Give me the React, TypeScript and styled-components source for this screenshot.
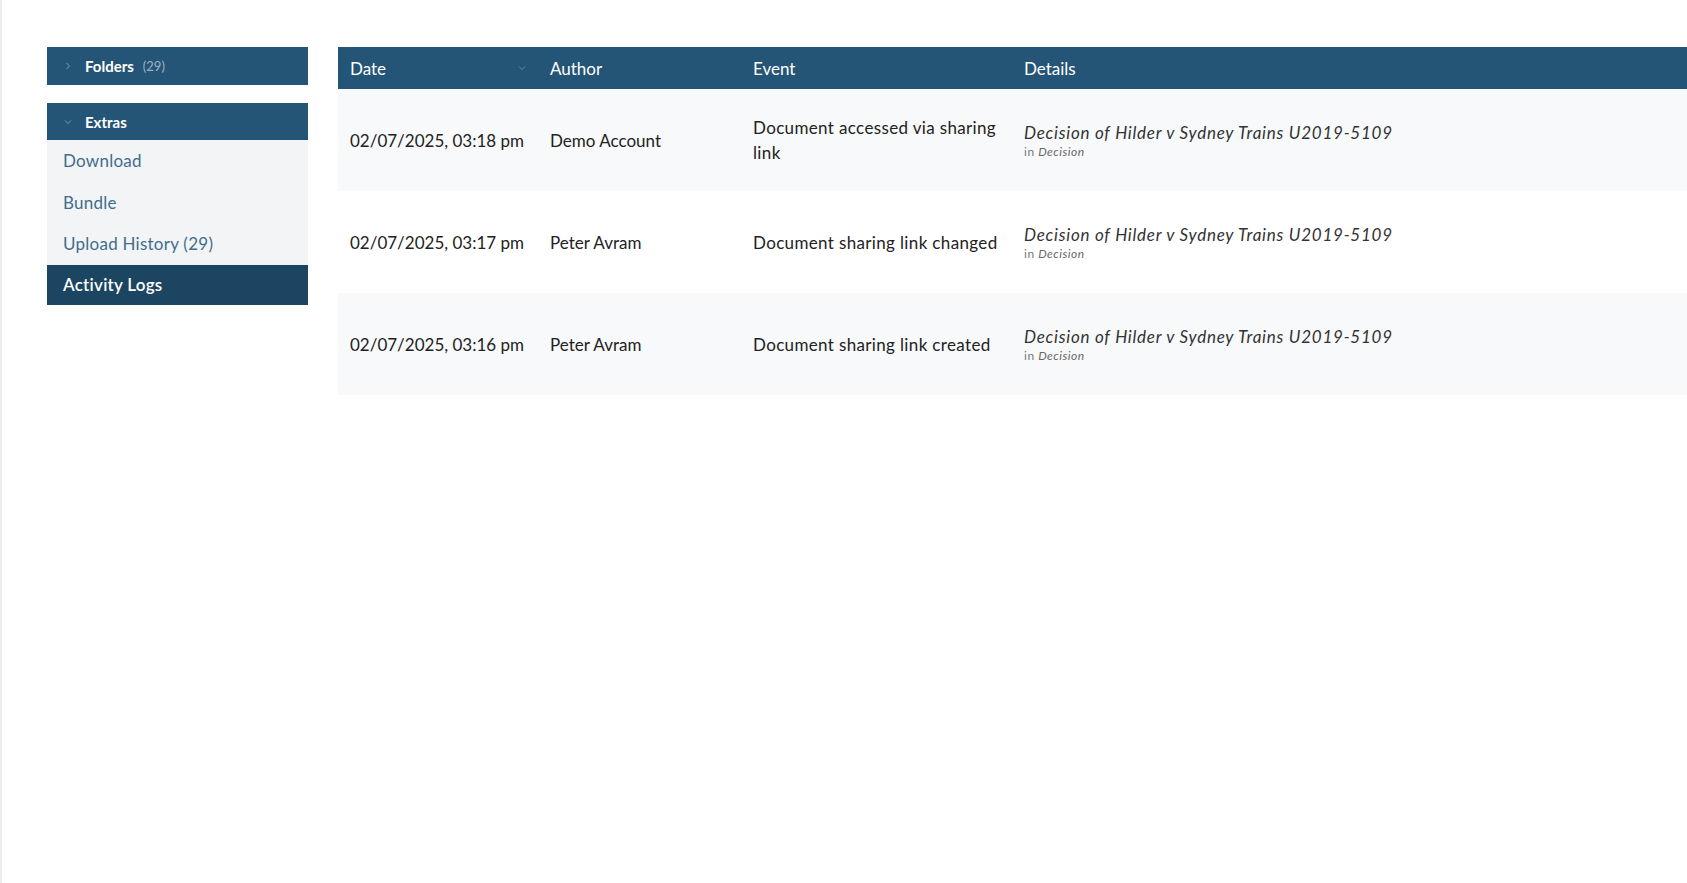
import styled, { createGlobalStyle } from "styled-components";

const GlobalStyle = createGlobalStyle`
  html, body {
    margin: 0;
    padding: 0;
    background: #fff;
    font-family: Lato, "Open Sans", sans-serif;
    color: #222;
  }
  #root {
    min-height: 100vh;
  }
`;

const Page = styled.div`
  display: flex;
  align-items: flex-start;
  gap: 30px;
  min-height: 100vh;
  box-sizing: border-box;
  padding: 47px 0 0 45px;
  border-left: 2px solid #ececec;
  overflow: hidden;
`;

const Sidebar = styled.aside`
  width: 261px;
  flex-shrink: 0;
  display: flex;
  flex-direction: column;
`;

const Panel = styled.div<{ $gap?: number }>`
  display: flex;
  flex-direction: column;
  margin-bottom: ${(p) => p.$gap ?? 0}px;
`;

const PanelHeader = styled.div<{ $h: number }>`
  height: ${(p) => p.$h}px;
  background: #245476;
  display: flex;
  align-items: center;
  padding-left: 17px;
  color: #fff;
  font-size: 15px;
  font-weight: 700;

  svg {
    margin-right: 13px;
  }
`;

const Count = styled.span`
  font-size: 13px;
  font-weight: 400;
  color: #9fb3c3;
  margin-left: 9px;
`;

const Item = styled.a<{ $active?: boolean }>`
  height: ${(p) => (p.$active ? 40 : 41.5)}px;
  display: flex;
  align-items: center;
  padding-left: 16px;
  font-size: 17px;
  letter-spacing: 0.25px;
  text-decoration: none;
  background: ${(p) => (p.$active ? "#1b4560" : "#f3f4f6")};
  color: ${(p) => (p.$active ? "#fff" : "#3f6d8e")};
  font-weight: ${(p) => (p.$active ? 600 : 400)};
`;

const Table = styled.div`
  flex: 1;
  min-width: 0;
  display: flex;
  flex-direction: column;
`;

const cols = "200px 203px 271px 1fr";

const HeadRow = styled.div`
  display: grid;
  grid-template-columns: ${cols};
  height: 42px;
  background: #245476;
  color: #fff;
  font-size: 17px;
`;

const HeadCell = styled.div`
  display: flex;
  align-items: center;
  justify-content: space-between;
  padding: 0 12px;
`;

const Row = styled.div<{ $shade: boolean }>`
  display: grid;
  grid-template-columns: ${cols};
  height: 102px;
  background: ${(p) => (p.$shade ? "#f8f9fa" : "#fff")};
  font-size: 17px;
  color: #222;
`;

const Cell = styled.div<{ $wide?: boolean }>`
  display: flex;
  flex-direction: column;
  justify-content: center;
  padding: 0 12px;
  line-height: 25px;
  letter-spacing: ${(p) => (p.$wide ? "0.35px" : "0")};
`;

const DocTitle = styled.div`
  font-style: italic;
  color: #333;
  line-height: 22px;
  letter-spacing: 0.75px;
  margin-top: 2px;
`;

const DocPlace = styled.div`
  font-size: 12px;
  color: #777;
  line-height: 16px;
  letter-spacing: 0.5px;

  em {
    color: #666;
  }
`;

const Chevron = ({ dir, color }: { dir: "right" | "down"; color: string }) => (
  <svg width="8" height="8" viewBox="0 0 8 8" fill="none">
    {dir === "right" ? (
      <path d="M2.5 1 L5.5 4 L2.5 7" stroke={color} strokeWidth="1" />
    ) : (
      <path d="M1 2.5 L4 5.5 L7 2.5" stroke={color} strokeWidth="1" />
    )}
  </svg>
);

const logs = [
  { date: "02/07/2025, 03:18 pm", author: "Demo Account", event: "Document accessed via sharing link" },
  { date: "02/07/2025, 03:17 pm", author: "Peter Avram", event: "Document sharing link changed" },
  { date: "02/07/2025, 03:16 pm", author: "Peter Avram", event: "Document sharing link created" },
];

export default function App() {
  return (
    <>
      <GlobalStyle />
      <Page>
        <Sidebar>
          <Panel $gap={18}>
            <PanelHeader $h={38}>
              <Chevron dir="right" color="#7f9cb3" />
              Folders <Count>(29)</Count>
            </PanelHeader>
          </Panel>
          <Panel>
            <PanelHeader $h={37}>
              <Chevron dir="down" color="#7f9cb3" />
              Extras
            </PanelHeader>
            <Item href="#">Download</Item>
            <Item href="#">Bundle</Item>
            <Item href="#">Upload History (29)</Item>
            <Item href="#" $active>
              Activity Logs
            </Item>
          </Panel>
        </Sidebar>
        <Table>
          <HeadRow>
            <HeadCell>
              Date
              <Chevron dir="down" color="#5f8fa8" />
            </HeadCell>
            <HeadCell>Author</HeadCell>
            <HeadCell>Event</HeadCell>
            <HeadCell>Details</HeadCell>
          </HeadRow>
          {logs.map((l, i) => (
            <Row key={i} $shade={i % 2 === 0}>
              <Cell>{l.date}</Cell>
              <Cell>{l.author}</Cell>
              <Cell $wide>{l.event}</Cell>
              <Cell>
                <DocTitle>Decision of Hilder v Sydney Trains U2019-5109</DocTitle>
                <DocPlace>
                  in <em>Decision</em>
                </DocPlace>
              </Cell>
            </Row>
          ))}
        </Table>
      </Page>
    </>
  );
}
